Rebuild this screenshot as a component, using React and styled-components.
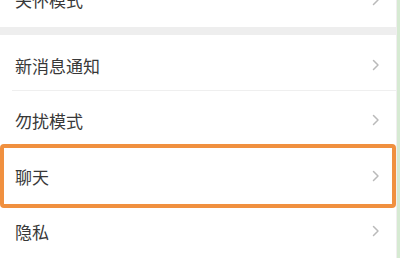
import React from "react";
import styled, { createGlobalStyle } from "styled-components";

const Global = createGlobalStyle`
  html, body { margin: 0; padding: 0; background: #ffffff; }
  body { width: 400px; height: 258px; overflow: hidden; }
`;

const Page = styled.div`
  display: flex;
  width: 400px;
  height: 258px;
  overflow: hidden;
  background: #ffffff;
`;

const Main = styled.div`
  flex: 1;
  display: flex;
  flex-direction: column;
  border-right: 1px solid #f1eef0;
`;

const Strip = styled.div`
  width: 3px;
  background: #d6ead2;
`;

const Row = styled.div`
  box-sizing: border-box;
  flex: none;
  display: flex;
  align-items: center;
  justify-content: space-between;
  height: ${(p) => p.$h}px;
  margin-top: ${(p) => p.$mt || 0}px;
  padding: ${(p) => p.$pt || 0}px 16px 0 15px;
  font-family: "Noto Sans CJK SC", "Noto Sans", sans-serif;
  font-size: 17px;
  color: #383838;
  background: #ffffff;
`;

const Highlight = styled(Row)`
  border: 4px solid #f0903f;
  border-radius: 4px;
  padding: 0 12px 0 11px;
`;

const Band = styled.div`
  flex: none;
  height: 8px;
  background: #eeeeee;
`;

const Divider = styled.div`
  flex: none;
  height: 1px;
  margin-left: 12px;
  background: #efefef;
`;

const Chevron = () => (
  <svg width="8" height="12" viewBox="0 0 8 12">
    <polyline points="1.5,1.5 6,6 1.5,10.5" fill="none" stroke="#bababa" strokeWidth="1.5" strokeLinecap="round" strokeLinejoin="round" />
  </svg>
);

export default function App() {
  return (
    <>
      <Global />
      <Page>
        <Main>
          <Row $h={55} $mt={-28}>
            <span>关怀模式</span>
            <Chevron />
          </Row>
          <Band />
          <Row $h={55} $pt={5}>
            <span>新消息通知</span>
            <Chevron />
          </Row>
          <Divider />
          <Row $h={53} $pt={5}>
            <span>勿扰模式</span>
            <Chevron />
          </Row>
          <Highlight $h={64}>
            <span>聊天</span>
            <Chevron />
          </Highlight>
          <Row $h={46}>
            <span>隐私</span>
            <Chevron />
          </Row>
        </Main>
        <Strip />
      </Page>
    </>
  );
}
